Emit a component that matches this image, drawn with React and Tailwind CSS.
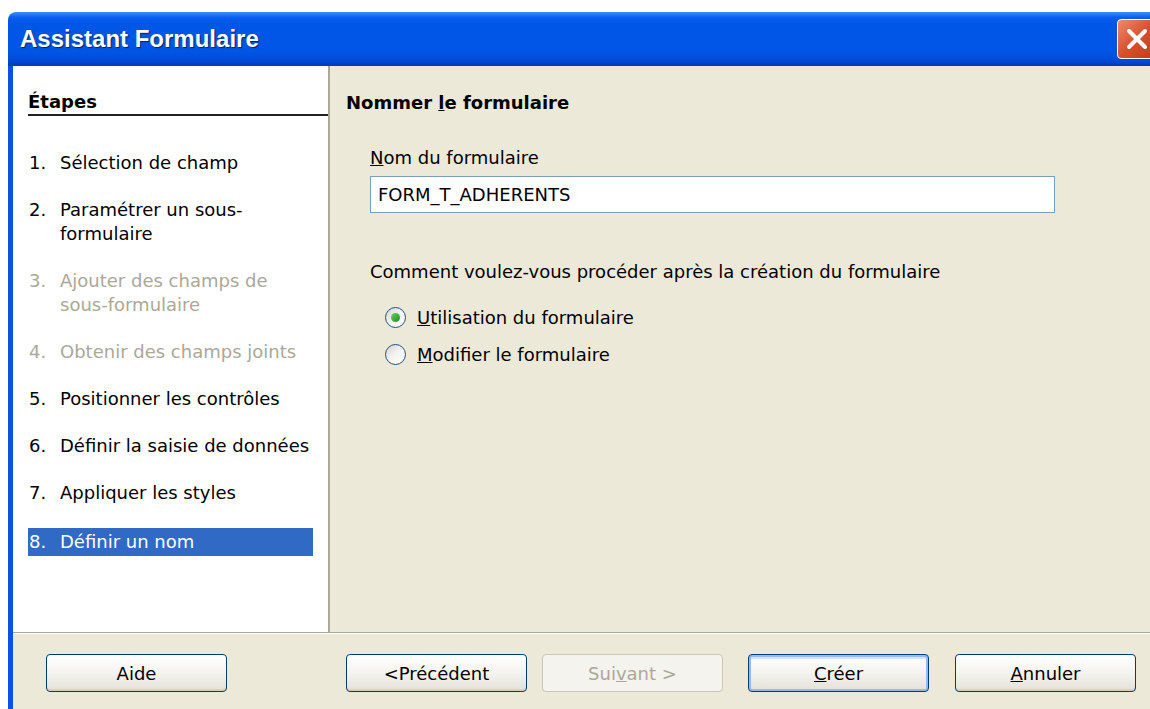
import React from "react";

const font = { fontFamily: '"DejaVu Sans", Verdana, sans-serif' };
const titleFont = { fontFamily: '"Liberation Sans", Arial, sans-serif' };

function Step({ n, lines, state }) {
  const color =
    state === "disabled" ? "text-[#ACA899]" : state === "active" ? "text-white" : "text-black";
  return (
    <div
      className={`flex pl-[1px] leading-[24px] ${color} ${
        state === "active" ? "bg-[#316AC5] w-[285px] h-[28px] items-center" : ""
      }`}
    >
      <span className="w-[31px] shrink-0">{n}.</span>
      <span>
        {lines.map((l, i) => (
          <div key={i}>{l}</div>
        ))}
      </span>
    </div>
  );
}

function Radio({ checked, children }) {
  return (
    <div className="flex items-center gap-[11px] h-[37px]">
      <span className="w-[21px] h-[21px] rounded-full border border-[#1C5180] bg-gradient-to-br from-[#D6D5CE] via-[#F4F4F1] to-white flex items-center justify-center">
        {checked && (
          <span className="w-[9px] h-[9px] rounded-full bg-gradient-to-br from-[#62D65A] to-[#218A1F]" />
        )}
      </span>
      <span>{children}</span>
    </div>
  );
}

function Button({ children, disabled, isDefault, className = "" }) {
  const base =
    "w-[181px] h-[38px] rounded-[4px] flex items-center justify-center border";
  if (disabled) {
    return (
      <div className={`${base} border-[#C9C7BA] bg-[#F4F3EE] text-[#ACA899] ${className}`}>
        {children}
      </div>
    );
  }
  return (
    <div
      className={`${base} border-[#003C74] bg-gradient-to-b from-white via-[#F4F3EE] to-[#E3E1D8] text-black ${
        isDefault
          ? "shadow-[inset_0_0_0_2px_#98B8EE,inset_0_2px_0_2px_#CEE7FF]"
          : "shadow-[inset_0_-2px_0_#D6D0C5]"
      } ${className}`}
    >
      {children}
    </div>
  );
}

export default function App() {
  return (
    <div className="w-[1150px] h-[709px] bg-white overflow-hidden pt-[12px] pl-[8px]" style={font}>
      <div className="w-[1180px] h-[697px] flex flex-col">
        {/* title bar */}
        <div className="h-[54px] shrink-0 rounded-tl-[8px] flex items-center justify-between pl-[12px] pr-[31px] bg-[linear-gradient(to_bottom,#3D8EFF_0%,#0A5FF0_10%,#0056E6_22%,#0055E5_75%,#0049D4_92%,#0039B0_100%)]">
          <span
            className="text-white font-bold text-[24px] [text-shadow:1px_1px_1px_#0A1E6A]"
            style={titleFont}
          >
            Assistant Formulaire
          </span>
          <div className="w-[40px] h-[40px] rounded-[4px] border border-white bg-gradient-to-br from-[#EC8A6A] via-[#D7502C] to-[#C03A18] flex items-center justify-center">
            <svg width="26" height="26" viewBox="0 0 26 26">
              <path d="M5 5 L21 21 M21 5 L5 21" stroke="white" strokeWidth="4" strokeLinecap="round" />
            </svg>
          </div>
        </div>

        {/* body */}
        <div className="flex-1 flex flex-col border-l-[5px] border-[#0852E6] bg-[#ECE9D8] text-[18px]">
          <div className="h-[567px] flex border-b border-[#ACA899] shadow-[0_1px_0_white]">
            {/* steps panel */}
            <div className="w-[317px] shrink-0 bg-white border-r-2 border-[#ACA899] pl-[15px] pt-[26px]">
              <div className="font-bold border-b-2 border-[#222] pb-[2px] leading-[20px]">
                Étapes
              </div>
              <div className="flex flex-col gap-[23px] mt-[35px]">
                <Step n="1" lines={["Sélection de champ"]} />
                <Step n="2" lines={["Paramétrer un sous-", "formulaire"]} />
                <Step n="3" lines={["Ajouter des champs de", "sous-formulaire"]} state="disabled" />
                <Step n="4" lines={["Obtenir des champs joints"]} state="disabled" />
                <Step n="5" lines={["Positionner les contrôles"]} />
                <Step n="6" lines={["Définir la saisie de données"]} />
                <Step n="7" lines={["Appliquer les styles"]} />
                <Step n="8" lines={["Définir un nom"]} state="active" />
              </div>
            </div>

            {/* content */}
            <div className="flex-1 pl-[16px] pt-[27px]">
              <div className="font-bold leading-[20px]">
                Nommer <span className="underline">l</span>e formulaire
              </div>
              <div className="pl-[24px] mt-[35px]">
                <div className="leading-[20px]">
                  <span className="underline">N</span>om du formulaire
                </div>
                <div className="mt-[8px] w-[685px] h-[37px] bg-white border border-[#7F9DB9] flex items-center pl-[7px]">
                  FORM_T_ADHERENTS
                </div>
                <div className="mt-[49px] leading-[20px]">
                  Comment voulez-vous procéder après la création du formulaire
                </div>
                <div className="pl-[15px] mt-[17px]">
                  <Radio checked>
                    <span className="underline">U</span>tilisation du formulaire
                  </Radio>
                  <Radio>
                    <span className="underline">M</span>odifier le formulaire
                  </Radio>
                </div>
              </div>
            </div>
          </div>

          {/* buttons */}
          <div className="flex items-center pt-[21px] pl-[33px]">
            <Button>Aide</Button>
            <Button className="ml-[119px]">&lt;Précédent</Button>
            <Button disabled className="ml-[15px]">
              Sui<span className="underline">v</span>ant &gt;
            </Button>
            <Button isDefault className="ml-[25px]">
              <span className="underline">C</span>réer
            </Button>
            <Button className="ml-[26px]">
              <span className="underline">A</span>nnuler
            </Button>
          </div>
        </div>
      </div>
    </div>
  );
}
